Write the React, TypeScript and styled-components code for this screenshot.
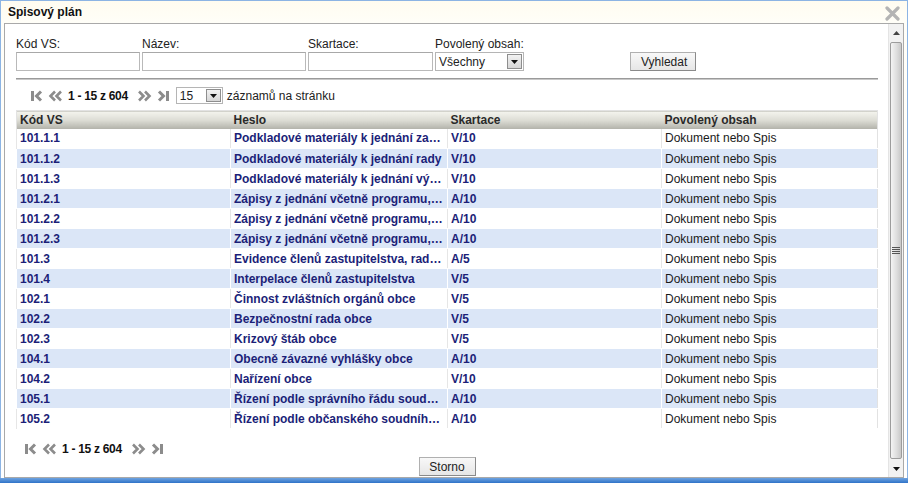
import React from 'react';
import styled, { createGlobalStyle } from 'styled-components';

const GlobalStyle = createGlobalStyle`
  body {
    margin: 0;
    font-family: "Liberation Sans", Arial, sans-serif;
    font-size: 12px;
    color: #222;
  }
  * { box-sizing: border-box; }
`;

type Row = { code: string; title: string; shred: string; content: string };

const rows: Row[] = [
  { code: '101.1.1', title: 'Podkladové materiály k jednání zastupitelstva', shred: 'V/10', content: 'Dokument nebo Spis' },
  { code: '101.1.2', title: 'Podkladové materiály k jednání rady', shred: 'V/10', content: 'Dokument nebo Spis' },
  { code: '101.1.3', title: 'Podkladové materiály k jednání výborů a komisí', shred: 'V/10', content: 'Dokument nebo Spis' },
  { code: '101.2.1', title: 'Zápisy z jednání včetně programu, usnesení zastupitelstva', shred: 'A/10', content: 'Dokument nebo Spis' },
  { code: '101.2.2', title: 'Zápisy z jednání včetně programu, usnesení rady', shred: 'A/10', content: 'Dokument nebo Spis' },
  { code: '101.2.3', title: 'Zápisy z jednání včetně programu, usnesení výborů', shred: 'A/10', content: 'Dokument nebo Spis' },
  { code: '101.3', title: 'Evidence členů zastupitelstva, rady a výborů', shred: 'A/5', content: 'Dokument nebo Spis' },
  { code: '101.4', title: 'Interpelace členů zastupitelstva', shred: 'V/5', content: 'Dokument nebo Spis' },
  { code: '102.1', title: 'Činnost zvláštních orgánů obce', shred: 'V/5', content: 'Dokument nebo Spis' },
  { code: '102.2', title: 'Bezpečnostní rada obce', shred: 'V/5', content: 'Dokument nebo Spis' },
  { code: '102.3', title: 'Krizový štáb obce', shred: 'V/5', content: 'Dokument nebo Spis' },
  { code: '104.1', title: 'Obecně závazné vyhlášky obce', shred: 'A/10', content: 'Dokument nebo Spis' },
  { code: '104.2', title: 'Nařízení obce', shred: 'V/10', content: 'Dokument nebo Spis' },
  { code: '105.1', title: 'Řízení podle správního řádu soudního', shred: 'A/10', content: 'Dokument nebo Spis' },
  { code: '105.2', title: 'Řízení podle občanského soudního řádu', shred: 'A/10', content: 'Dokument nebo Spis' },
];

function FirstIcon() {
  return (
    <svg width="14" height="12" viewBox="0 0 14 12">
      <rect x="1" y="1" width="3" height="10" fill="#8c8c8c" />
      <path d="M11 1.5 L6.5 6 L11 10.5" fill="none" stroke="#8c8c8c" strokeWidth="3" />
    </svg>
  );
}

function PrevIcon() {
  return (
    <svg width="16" height="12" viewBox="0 0 16 12">
      <path d="M8 1.5 L3.5 6 L8 10.5 M14 1.5 L9.5 6 L14 10.5" fill="none" stroke="#8c8c8c" strokeWidth="2.6" />
    </svg>
  );
}

function NextIcon() {
  return (
    <svg width="16" height="12" viewBox="0 0 16 12">
      <path d="M2 1.5 L6.5 6 L2 10.5 M8 1.5 L12.5 6 L8 10.5" fill="none" stroke="#8c8c8c" strokeWidth="2.6" />
    </svg>
  );
}

function LastIcon() {
  return (
    <svg width="14" height="12" viewBox="0 0 14 12">
      <path d="M3 1.5 L7.5 6 L3 10.5" fill="none" stroke="#8c8c8c" strokeWidth="3" />
      <rect x="10" y="1" width="3" height="10" fill="#8c8c8c" />
    </svg>
  );
}

function DownTriangle() {
  return (
    <svg width="7" height="4" viewBox="0 0 7 4">
      <path d="M0 0 H7 L3.5 4 Z" fill="#111" />
    </svg>
  );
}

function Pager({ indent }: { indent: number }) {
  return (
    <PagerNav $indent={indent}>
      <IconGroup>
        <FirstIcon />
        <PrevIcon />
      </IconGroup>
      <PageInfo>1 - 15 z 604</PageInfo>
      <IconGroup>
        <NextIcon />
        <LastIcon />
      </IconGroup>
    </PagerNav>
  );
}

export default function App() {
  return (
    <>
      <GlobalStyle />
      <Window>
        <TitleBar>
          <Title>Spisový plán</Title>
          <CloseButton>
            <svg width="15" height="15" viewBox="0 0 15 15">
              <path d="M2 2 L13 13 M13 2 L2 13" stroke="#b4b4b4" strokeWidth="3.2" strokeLinecap="round" />
            </svg>
          </CloseButton>
        </TitleBar>
        <Frame>
          <Content>
            <FilterRow>
              <Field $width={124}>
                <FieldLabel>Kód VS:</FieldLabel>
                <TextBox />
              </Field>
              <Field $width={164}>
                <FieldLabel>Název:</FieldLabel>
                <TextBox />
              </Field>
              <Field $width={125}>
                <FieldLabel>Skartace:</FieldLabel>
                <TextBox />
              </Field>
              <Field $width={89}>
                <FieldLabel>Povolený obsah:</FieldLabel>
                <Select $height={19}>
                  <SelectValue>Všechny</SelectValue>
                  <SelectArrow><DownTriangle /></SelectArrow>
                </Select>
              </Field>
              <SearchButton>Vyhledat</SearchButton>
            </FilterRow>
            <Divider />
            <TopPagerRow>
              <Pager indent={14} />
              <Select $height={17} style={{ width: 47 }}>
                <SelectValue>15</SelectValue>
                <SelectArrow><DownTriangle /></SelectArrow>
              </Select>
              <PageSizeLabel>záznamů na stránku</PageSizeLabel>
            </TopPagerRow>
            <Table>
              <colgroup>
                <col style={{ width: 214 }} />
                <col style={{ width: 217 }} />
                <col style={{ width: 214 }} />
                <col style={{ width: 216 }} />
              </colgroup>
              <thead>
                <tr>
                  <HeadCell>Kód VS</HeadCell>
                  <HeadCell>Heslo</HeadCell>
                  <HeadCell>Skartace</HeadCell>
                  <HeadCell>Povolený obsah</HeadCell>
                </tr>
              </thead>
              <tbody>
                {rows.map((r, i) => (
                  <BodyRow key={r.code} $alt={i % 2 === 1}>
                    <Cell $link>{r.code}</Cell>
                    <Cell $link>{r.title}</Cell>
                    <Cell $link>{r.shred}</Cell>
                    <Cell>{r.content}</Cell>
                  </BodyRow>
                ))}
              </tbody>
            </Table>
            <BottomPagerRow>
              <Pager indent={8} />
            </BottomPagerRow>
            <Footer>
              <StornoButton>Storno</StornoButton>
            </Footer>
          </Content>
          <Scrollbar>
            <ScrollArrow>
              <svg width="7" height="4" viewBox="0 0 7 4"><path d="M0 4 H7 L3.5 0 Z" fill="#444" /></svg>
            </ScrollArrow>
            <Track>
              <Thumb>
                <Grip />
              </Thumb>
            </Track>
            <ScrollArrow>
              <DownTriangle />
            </ScrollArrow>
          </Scrollbar>
        </Frame>
        <BottomBand />
      </Window>
    </>
  );
}

const Window = styled.div`
  width: 908px;
  height: 483px;
  display: flex;
  flex-direction: column;
  background: linear-gradient(#fffcf0, #fffef8 22px, #ffffff);
  border-top: 1px solid #8cb4e4;
  border-left: 1px solid #8cb4e4;
  border-right: 1px solid #8cb4e4;
  padding: 0 3px;
`;

const TitleBar = styled.div`
  height: 22px;
  display: flex;
  align-items: center;
  justify-content: space-between;
  padding: 0 4px 0 4px;
`;

const Title = styled.div`
  font-weight: bold;
  font-size: 12px;
  color: #111;
`;

const CloseButton = styled.div`
  display: flex;
  align-items: center;
  margin-top: 2px;
`;

const Frame = styled.div`
  height: 455px;
  display: flex;
  border: 1px solid #a9a9a9;
  background: #fff;
`;

const Content = styled.div`
  flex: 1;
  display: flex;
  flex-direction: column;
  padding: 13px 10px 0 11px;
`;

const FilterRow = styled.div`
  display: flex;
  align-items: flex-end;
  gap: 2px;
`;

const Field = styled.div<{ $width: number }>`
  display: flex;
  flex-direction: column;
  width: ${p => p.$width}px;
`;

const FieldLabel = styled.label`
  line-height: 14px;
  margin-bottom: 1px;
  color: #222;
  white-space: nowrap;
`;

const TextBox = styled.input`
  height: 19px;
  width: 100%;
  border: 1px solid #b9b9b9;
  border-top-color: #a8a8a8;
  padding: 0 3px;
  font: inherit;
`;

const Select = styled.div<{ $height: number }>`
  height: ${p => p.$height}px;
  display: flex;
  align-items: center;
  border: 1px solid #b5b5b5;
  background: #fff;
  padding: 1px;
`;

const SelectValue = styled.span`
  flex: 1;
  padding-left: 2px;
  color: #222;
`;

const SelectArrow = styled.span`
  width: 15px;
  height: 100%;
  display: flex;
  align-items: center;
  justify-content: center;
  background: linear-gradient(#f2f2f2, #d6d6d6);
  border: 1px solid #8e8e8e;
`;

const Button = styled.button`
  font: inherit;
  color: #222;
  height: 19px;
  padding: 0 10px;
  background: linear-gradient(#f8f8f8, #e6e6e6);
  border: 1px solid #b0b0b0;
  border-right-color: #8a8a8a;
  border-bottom-color: #8a8a8a;
  cursor: pointer;
`;

const SearchButton = styled(Button)`
  margin-left: 104px;
  width: 66px;
`;

const StornoButton = styled(Button)`
  width: 57px;
  padding: 0;
`;

const Divider = styled.hr`
  margin: 7px 0 0 0;
  height: 2px;
  border: none;
  border-top: 1px solid #9a9a9a;
  border-bottom: 1px solid #c8c8c8;
`;

const TopPagerRow = styled.div`
  margin-top: 7px;
  display: flex;
  align-items: center;
  height: 17px;
`;

const PagerNav = styled.div<{ $indent: number }>`
  display: flex;
  align-items: center;
  padding-left: ${p => p.$indent}px;
  margin-right: 6px;
`;

const IconGroup = styled.span`
  display: flex;
  align-items: center;
  gap: 3px;
`;

const PageInfo = styled.span`
  font-weight: bold;
  margin: 0 9px 0 5px;
  letter-spacing: -0.3px;
  color: #111;
`;

const PageSizeLabel = styled.span`
  margin-left: 4px;
  color: #222;
`;

const Table = styled.table`
  margin-top: 6px;
  width: 861px;
  table-layout: fixed;
  border-collapse: collapse;
  border: 1px solid #e2e2e2;
`;

const HeadCell = styled.th`
  height: 18px;
  padding: 0 3px;
  text-align: left;
  font-weight: bold;
  color: #2a2a2a;
  background: linear-gradient(#f4f4ee, #dcdcd4 50%, #b0b0a8);
  white-space: nowrap;
`;

const BodyRow = styled.tr<{ $alt: boolean }>`
  background: ${p => (p.$alt ? '#dbe6f7' : '#ffffff')};

  td {
    border-left: 1px solid ${p => (p.$alt ? '#ffffff' : '#e6e6e6')};
  }
`;

const Cell = styled.td<{ $link?: boolean }>`
  height: 20px;
  padding: 0 3px;
  white-space: nowrap;
  overflow: hidden;
  text-overflow: ellipsis;
  font-weight: ${p => (p.$link ? 'bold' : 'normal')};
  color: ${p => (p.$link ? '#1c1f78' : '#1a1a1a')};
  border-bottom: 1px solid transparent;
`;

const BottomPagerRow = styled.div`
  margin-top: 13px;
  height: 14px;
  display: flex;
  align-items: center;
`;

const Footer = styled.div`
  margin-top: 1px;
  display: flex;
  justify-content: center;
`;

const Scrollbar = styled.div`
  width: 17px;
  display: flex;
  flex-direction: column;
  background: #f2f2f2;
  border-left: 1px solid #e4e4e4;
`;

const ScrollArrow = styled.div`
  height: 17px;
  display: flex;
  align-items: center;
  justify-content: center;
`;

const Track = styled.div`
  flex: 1;
  display: flex;
  padding: 1px 1px;
`;

const Thumb = styled.div`
  flex: 1;
  display: flex;
  align-items: center;
  justify-content: center;
  border: 1px solid #9c9c9c;
  border-radius: 2px;
  background: linear-gradient(90deg, #f4f4f4, #dcdcdc 60%, #c8c8c8);
`;

const Grip = styled.div`
  width: 8px;
  height: 8px;
  background: repeating-linear-gradient(#555 0 1px, transparent 1px 2px);
`;

const BottomBand = styled.div`
  height: 5px;
  margin: 0 -4px;
  background: linear-gradient(#6fa3e0, #2f73c8);
`;
